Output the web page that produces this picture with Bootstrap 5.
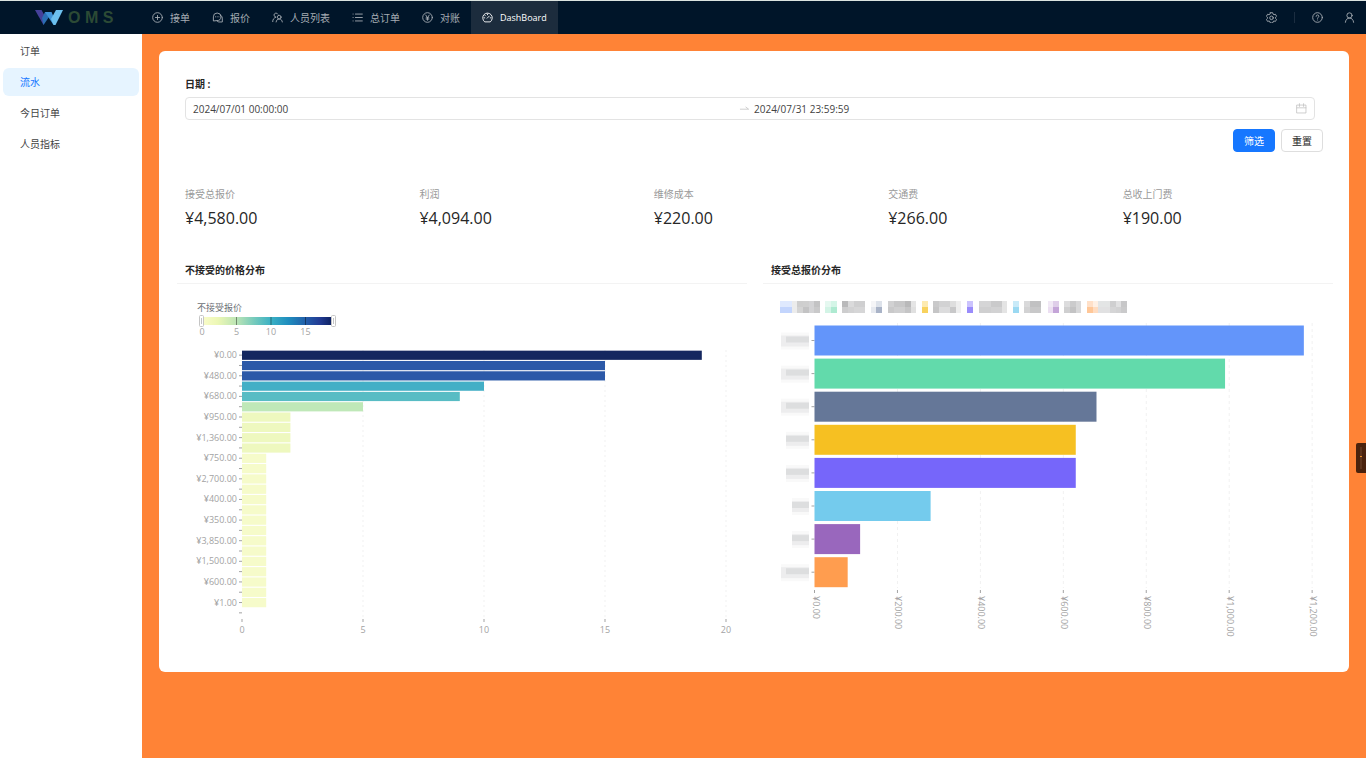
<!DOCTYPE html>
<html lang="zh-CN">
<head>
<meta charset="utf-8">
<meta name="viewport" content="width=device-width, initial-scale=1">
<title>OMS DashBoard</title>
<link href="https://cdn.jsdelivr.net/npm/bootstrap@5.3.0/dist/css/bootstrap.min.css" rel="stylesheet">
<style>
  body { font-family: "Open Sans", "Noto Sans CJK SC", sans-serif; font-size: 10px; line-height: 16px; color: #262626; background: #ff8336; }
  .topbar { background: #001529; border-top: 1px solid #dbe3e0; height: 34px; color: #a6adb4; }
  .brand-area { width: 141px; padding-left: 35px; gap: 5px; }
  .brand-name { font: 900 16px/20px "Liberation Sans", sans-serif; color: #2c4a35; }
  .topbar .nav-link { display: flex; align-items: center; gap: 7px; padding: 0 11px; height: 33px; color: #a6adb4; }
  .topbar .nav-link.active { background: #1c2c3d; color: #fff; font-size: 9px; }
  .ico { width: 11px; height: 11px; flex: none; fill: none; stroke: currentColor; stroke-width: 1.3; stroke-linecap: round; stroke-linejoin: round; }
  .tools { padding-right: 11px; gap: 17px; }
  .tools a { color: #a6adb4; display: flex; }
  .tools .rule { width: 1px; height: 11px; background: #1b2d40; }
  .side { width: 142px; background: #fff; padding: 3px; }
  .side .nav { gap: 3px; }
  .side .nav-link { padding: 6px 17px; border-radius: 6px; color: #434343; }
  .side .nav-link.active { background: #e6f4ff; color: #1677ff; }
  .shell { min-height: calc(100vh - 34px); }
  .content { padding: 17px; }
  .panel { background: #fff; border-radius: 6px; padding: 25px 0 18px 18px; }
  .filters { padding: 0 26px 0 8px; }
  .filters label { font-weight: 700; margin-bottom: 5px; }
  .range { border: 1px solid #e3e3e3; border-radius: 4px; height: 23px; padding: 0 7px; margin-right: 8px; color: #434343; }
  .range input { border: 0; outline: 0; padding: 0; background: none; color: inherit; font: inherit; min-width: 0; flex: 1 1 0; }
  .range .ico { color: #bfbfbf; stroke-width: 1.1; }
  .actions { gap: 6px; margin-top: 9px; }
  .actions .btn { --bs-btn-font-size: 10px; --bs-btn-line-height: 16px; --bs-btn-padding-x: 0; --bs-btn-padding-y: 0; --bs-btn-border-radius: 4px; height: 23px; width: 42px; }
  .actions .btn-primary { --bs-btn-bg: #1677ff; --bs-btn-border-color: #1677ff; }
  .actions .btn-plain { --bs-btn-color: #262626; --bs-btn-border-color: #dedede; background: #fff; }
  .stats { margin: 34px 0 32px; }
  .stats .col { padding: 0 8px; }
  .stats dt { font-weight: 400; color: #999; }
  .stats dd { margin: 4px 0 0; font-size: 16px; line-height: 24px; }
  .chart-col { padding: 0 16px 0 0; }
  .chart-col h2 { font-size: 10px; line-height: 16px; font-weight: 700; margin: 0; padding: 0 8px 5px; border-bottom: 1px solid #f3f3f3; }
  .chart-col svg { display: block; width: 100%; height: auto; }
  .axis-text { font-size: 9px; fill: #a3a3a3; }
  .legend-text { font-size: 9px; fill: #6b6f76; }
  .side-tab { top: 443px; right: 0; width: 10px; height: 30px; padding: 0; border: 0; border-radius: 2px 0 0 2px; background: #4a220d; z-index: 5; }
  .side-tab svg { display: block; }
</style>
</head>
<body>
<header class="topbar d-flex align-items-center">
  <a href="#" class="brand-area d-flex align-items-center text-decoration-none">
    <svg width="28" height="15" viewBox="0 0 28 15" aria-hidden="true">
      <path fill="#45409a" d="M0 0h6.500l4.500 8-2.500 7z"/><path fill="#2a6fb4" d="M8.500 15 7 8 10 2h6.500l-2.500 5z"/>
      <path fill="#3f93d8" d="M10 2h6.500l3.500 8-1.500 5z"/><path fill="#6cc0ee" d="M18.500 15 16 9 21 0h7L20.500 15z"/>
    </svg>
    <span class="brand-name">O M S</span>
  </a>
  <nav class="nav flex-nowrap text-nowrap">
    <a class="nav-link" href="#"><svg class="ico" viewBox="0 0 16 16"><circle cx="8" cy="8" r="7"/><path d="M8 5v6M5 8h6"/></svg>接单</a>
    <a class="nav-link" href="#"><svg class="ico" viewBox="0 0 16 16"><path d="M2 12.500V7a5.500 5.500 0 1 1 5.500 5.500zM12.500 4.500a5 5 0 0 1 2.500 4.500v5.500H10a5 5 0 0 1-3-1.500"/><path d="M5 7h.1M7.500 7h.1M10 7h.1"/></svg>报价</a>
    <a class="nav-link" href="#"><svg class="ico" viewBox="0 0 16 16"><path d="M5.500 7.500A3 3 0 1 1 8.500 3M1 14c0-3.500 2-5.500 4.500-6.500"/><circle cx="10.500" cy="7.500" r="2.700"/><path d="M6 14.500c.3-2.700 2-4.300 4.500-4.300s4.200 1.600 4.500 4.300"/></svg>人员列表</a>
    <a class="nav-link" href="#"><svg class="ico" viewBox="0 0 16 16"><path d="M5 3h10M5 8h10M5 13h10M1.500 3h.2M1.500 8h.2M1.500 13h.2"/></svg>总订单</a>
    <a class="nav-link" href="#"><svg class="ico" viewBox="0 0 16 16"><circle cx="8" cy="8" r="7"/><path d="m5.500 4.500 2.500 4 2.500-4M8 8.500V12M6 8.500h4M6 10.300h4"/></svg>对账</a>
    <a class="nav-link active" href="#" aria-current="page"><svg class="ico" viewBox="0 0 16 16"><path d="M3.500 14a7 7 0 1 1 9 0zM7.500 9l3-3M8 3v1M3 8.500h1M12 8.500h1M4.500 5l.6.600"/></svg>DashBoard</a>
  </nav>
  <div class="tools d-flex align-items-center ms-auto">
    <a href="#" aria-label="设置"><svg class="ico" viewBox="0 0 16 16"><path d="M6.300 1h3.400l.5 2 1.500.9 2-.600 1.700 2.900-1.500 1.400v1.800l1.500 1.400-1.700 2.900-2-.600-1.500.9-.5 2H6.300l-.5-2-1.500-.9-2 .600L.6 10.800l1.500-1.400V7.600L.6 6.200l1.700-2.900 2 .600L5.800 3z"/><circle cx="8" cy="8.500" r="2.600"/></svg></a>
    <span class="rule"></span>
    <a href="#" aria-label="帮助"><svg class="ico" viewBox="0 0 16 16"><circle cx="8" cy="8" r="7"/><path d="M6 6.300C6 5 7 4.300 8 4.300s2 .700 2 1.900C10 7.600 8 7.600 8 9.200M8 11.600v.1"/></svg></a>
    <a href="#" class="ms-1" aria-label="用户"><svg class="ico" viewBox="0 0 16 16"><circle cx="8" cy="5" r="3.800"/><path d="M2 15c.3-3.700 2.800-6.200 6-6.200s5.700 2.500 6 6.200"/></svg></a>
  </div>
</header>

<div class="shell d-flex">
  <aside class="side flex-shrink-0">
    <nav class="nav flex-column">
      <a class="nav-link" href="#">订单</a>
      <a class="nav-link active" href="#" aria-current="page">流水</a>
      <a class="nav-link" href="#">今日订单</a>
      <a class="nav-link" href="#">人员指标</a>
    </nav>
  </aside>

  <main class="content flex-grow-1">
    <section class="panel">
      <form class="filters" onsubmit="return false">
        <label for="from" class="d-block">日期&nbsp;:</label>
        <div class="range d-flex align-items-center">
          <input id="from" type="text" value="2024/07/01 00:00:00">
          <svg class="ico mx-1" viewBox="0 0 16 16"><path d="M2 9h12l-4-3"/></svg>
          <input type="text" aria-label="结束日期" value="2024/07/31 23:59:59">
          <svg class="ico" viewBox="0 0 16 16"><path d="M1.500 3h13v11.500h-13zM1.500 7h13M5 1v4M11 1v4"/></svg>
        </div>
        <div class="actions d-flex justify-content-end">
          <button type="submit" class="btn btn-primary">筛选</button>
          <button type="reset" class="btn btn-plain">重置</button>
        </div>
      </form>

      <dl class="stats row g-0">
        <div class="col"><dt>接受总报价</dt><dd>¥4,580.00</dd></div>
        <div class="col"><dt>利润</dt><dd>¥4,094.00</dd></div>
        <div class="col"><dt>维修成本</dt><dd>¥220.00</dd></div>
        <div class="col"><dt>交通费</dt><dd>¥266.00</dd></div>
        <div class="col"><dt>总收上门费</dt><dd>¥190.00</dd></div>
      </dl>

      <div class="row g-0">
        <div class="col-6 chart-col">
          <h2>不接受的价格分布</h2>
          <svg id="rejected" viewBox="0 0 570 370" role="img" aria-label="不接受的价格分布">
            <defs><linearGradient id="ramp"><stop offset="0" stop-color="#fafccb"/><stop offset=".12" stop-color="#ecf7b5"/><stop offset=".26" stop-color="#bde5b5"/><stop offset=".4" stop-color="#75cabc"/><stop offset=".53" stop-color="#3ab0c4"/><stop offset=".66" stop-color="#1f8dbe"/><stop offset=".8" stop-color="#225ba8"/><stop offset=".9" stop-color="#223b93"/><stop offset="1" stop-color="#0c1f5c"/></linearGradient></defs>
          </svg>
        </div>
        <div class="col-6 chart-col">
          <h2>接受总报价分布</h2>
          <svg id="accepted" viewBox="0 0 570 370" role="img" aria-label="接受总报价分布"></svg>
        </div>
      </div>
    </section>
  </main>
</div>

<button type="button" class="side-tab position-fixed" aria-label="展开">
  <svg width="10" height="30" viewBox="0 0 10 30"><path fill="#5c341d" d="M4 4h2v22H4z"/><path fill="#e88b24" d="M4 13h2v1H4z"/></svg>
</button>

<script src="https://cdn.jsdelivr.net/npm/bootstrap@5.3.0/dist/js/bootstrap.bundle.min.js"></script>
<script>
  const NS = 'http://www.w3.org/2000/svg';
  function add(svg, tag, attrs, text) {
    const el = document.createElementNS(NS, tag);
    for (const k in attrs) el.setAttribute(k, attrs[k]);
    if (text !== undefined) el.textContent = text;
    svg.appendChild(el);
  }
  const line = (svg, x1, y1, x2, y2, color, dash) =>
    add(svg, 'line', { x1, y1, x2, y2, stroke: color, 'stroke-dasharray': dash || 'none' });
  const rect = (svg, x, y, width, height, fill) => add(svg, 'rect', { x, y, width, height, fill });

  // Rejected quotes: count per price
  (function () {
    const svg = document.getElementById('rejected');
    const x0 = 65, top = 66, step = 268 / 26, unit = 24.2;
    const counts = [19, 15, 15, 10, 9, 5, 2, 2, 2, 2].concat(Array(15).fill(1));
    const colors = { 19: '#14275f', 15: '#2c59a8', 10: '#43afc6', 9: '#58bcc4', 5: '#bfe8b8', 2: '#eef8bf', 1: '#f6fbca' };
    const labels = ['¥0.00', '¥480.00', '¥680.00', '¥950.00', '¥1,360.00', '¥750.00', '¥2,700.00', '¥400.00', '¥350.00', '¥3,850.00', '¥1,500.00', '¥600.00', '¥1.00'];

    add(svg, 'text', { x: 20, y: 27, class: 'legend-text' }, '不接受报价');
    rect(svg, 25, 33, 131, 8, 'url(#ramp)');
    [0, 5, 10, 15].forEach((v, i) => {
      const x = 25 + i * 34.5;
      if (i) line(svg, x, 33, x, 41, 'rgba(0,0,0,.4)');
      add(svg, 'text', { x, y: 51, class: 'axis-text', 'text-anchor': 'middle' }, v);
    });
    [22.5, 154.5].forEach(x => {
      add(svg, 'rect', { x, y: 31.5, width: 4, height: 11, rx: 1, fill: '#fff', stroke: '#c5c5c5' });
      line(svg, x + 2, 34, x + 2, 40, '#c5c5c5');
    });
    for (let v = 0; v <= 20; v += 5) {
      const x = x0 + v * unit;
      if (v) line(svg, x, top, x, 334, '#f1f1f1', '2 3');
      line(svg, x, 335, x, 338, '#a3a3a3');
      add(svg, 'text', { x, y: 349, class: 'axis-text', 'text-anchor': 'middle' }, v);
    }
    for (let i = 0; i < 26; i++) {
      const y = top + (i + .5) * step;
      line(svg, x0 - 3, y, x0, y, '#a3a3a3');
      if (i < 25) rect(svg, x0, y - 4.5, counts[i] * unit, 9.200, colors[counts[i]]);
      if (i % 2 === 0 && labels[i / 2]) add(svg, 'text', { x: 60, y: y + 3, class: 'axis-text', 'text-anchor': 'end' }, labels[i / 2]);
    }
  })();

  // Accepted quotes: total per person, names masked
  (function () {
    const svg = document.getElementById('accepted');
    const x0 = 51.5, unit = 0.4147, step = 33.1;
    const bars = [
      [1180, '#6395fa', 28], [990, '#62daab', 28], [680, '#657798', 28], [630, '#f6c022', 23],
      [630, '#7666fa', 23], [280, '#74cbed', 17], [110, '#9967bd', 17], [80, '#ff9d4f', 28]
    ];
    for (let v = 0; v <= 1200; v += 200) {
      const x = x0 + v * unit;
      if (v) line(svg, x, 39, x, 304, '#f1f1f1', '3 3');
      line(svg, x, 306, x, 309, '#a3a3a3');
      add(svg, 'text', { x: 0, y: 0, class: 'axis-text', transform: `translate(${x - 2} 312) rotate(90)` },
        '¥' + v.toLocaleString('en-US') + '.00');
    }
    bars.forEach(([value, color, w], i) => {
      const y = 41.5 + i * step, x = 46 - w, inset = w === 28 ? 5 : 0;
      line(svg, x0 - 3, y + 15, x0, y + 15, '#a3a3a3');
      rect(svg, x0, y, value * unit, 30, color);
      rect(svg, x, y + 7, w, 17, '#f9f9f9');
      rect(svg, x, y + 10, w, 11, '#ededee');
      rect(svg, x + inset, y + 11, w - inset, 6, '#dddedf');
    });

    // Masked legend tiles: x, width, upper colour, lower colour
    const tiles = [
      [17, 12, '#dfe9fe', '#c3d5fd'], [29, 5, '#ececec', '#ececec'], [34, 6, '#cecece', '#d4d4d4'], [40, 6, '#cfcfcf', '#c3c3c4'], [46, 5, '#d3d3d5', '#d3d3d5'], [51, 6, '#c3c3c4', '#c9c9ca'],
      [62, 6, '#e5f8f0', '#d3f4e6'], [68, 6, '#d4f5e7', '#aeead1'], [79, 6, '#b9b9ba', '#cdcdce'], [85, 6, '#dadadb', '#d2d2d3'], [91, 11, '#cfcfd0', '#d6d6d7'],
      [108, 5, '#f5f5f7', '#e6e9ef'], [113, 6, '#dde2ea', '#a9b3c7'], [125, 6, '#d1d1d2', '#c9c9ca'], [131, 11, '#c7c7c8', '#cfcfd0'], [142, 6, '#b9b9ba', '#c5c5c6'], [148, 5, '#e5e5e5', '#e0e0e0'],
      [159, 6, '#fdeab0', '#f8d25e'], [170, 6, '#c9c9ca', '#c5c5c6'], [176, 11, '#d2d2d3', '#dcdcdd'], [187, 6, '#dedede', '#c8c8c9'], [193, 5, '#eee', '#eee'],
      [204, 6, '#cbc3fd', '#9a8cfb'], [216, 12, '#d5d5d6', '#cfcfd0'], [228, 11, '#cacacb', '#d2d2d3'], [239, 5, '#e4e4e4', '#e4e4e4'],
      [250, 6, '#c9eaf8', '#9bd9f2'], [261, 6, '#d9d9da', '#d2d2d3'], [267, 11, '#c1c1c2', '#c8c8c9'],
      [285, 5, '#f1e9f5', '#ecdff2'], [290, 6, '#dfcee9', '#c4a5d8'], [301, 6, '#dcdcdd', '#cfcfd0'], [307, 6, '#cbcbcc', '#c3c3c4'], [313, 5, '#d8d8d9', '#d8d8d9'],
      [324, 6, '#ffe0c8', '#ffc798'], [330, 5, '#fff0e4', '#ffdcc0'], [335, 12, '#e3e5e5', '#e1e1e2'], [347, 6, '#cfcfd0', '#d5d5d6'], [353, 5, '#e1e1e2', '#d2d2d3'], [358, 6, '#c7c7c8', '#cacacb']
    ];
    tiles.forEach(([x, w, upper, lower]) => {
      rect(svg, x, 17, w, 6, upper);
      rect(svg, x, 23, w, 6, lower);
    });
  })();
</script>
</body>
</html>
